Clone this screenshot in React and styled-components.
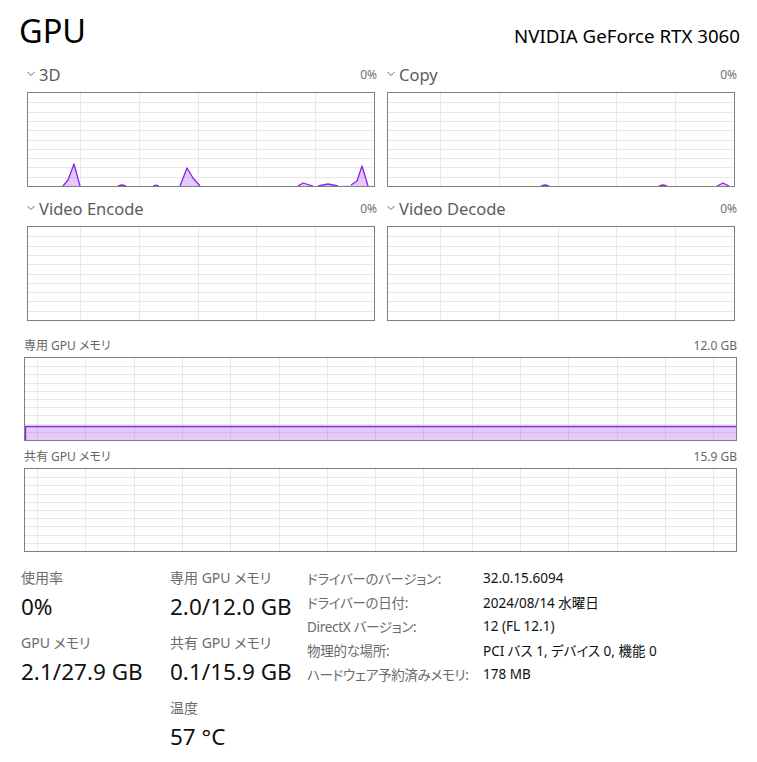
import React from "react";
import styled, { createGlobalStyle } from "styled-components";

const GlobalStyle = createGlobalStyle`
  body {
    margin: 0;
    background: #ffffff;
    font-family: "Noto Sans", "Noto Sans CJK JP", sans-serif;
    font-feature-settings: "palt";
    color: #000;
  }
`;

const PURPLE = "#8b22e8";
const FILL = "rgba(139, 34, 232, 0.24)";
const GRID = "#e8e8e8";

const Page = styled.div`
  width: 757px;
  box-sizing: border-box;
  padding: 11px 20px 0 21px;
`;

const Header = styled.div`
  display: flex;
  justify-content: space-between;
  align-items: baseline;
  margin-right: -3px;
`;

const Title = styled.h1`
  margin: 0 0 0 -2px;
  font-size: 32.5px;
  line-height: 40px;
  font-weight: 400;
`;

const Model = styled.div`
  font-size: 18.7px;
  line-height: 24px;
`;

const SmallGrid = styled.div`
  display: grid;
  grid-template-columns: 350px 350px;
  column-gap: 10px;
  row-gap: 9px;
  margin: 11px 0 0 6px;
`;

const ChartCell = styled.div`
  display: flex;
  flex-direction: column;
`;

const ChartHead = styled.div`
  display: flex;
  align-items: center;
  justify-content: space-between;
  height: 24px;
  margin-bottom: 6px;
`;

const ChartName = styled.div`
  display: flex;
  align-items: center;
  gap: 4px;
  font-size: 16.5px;
  color: #5c5c5c;
`;

const SmallValue = styled.div`
  font-size: 12px;
  color: #707070;
`;

const ChartBox = styled.div`
  box-sizing: border-box;
  width: ${(p) => p.$width || "100%"};
  height: ${(p) => p.$height}px;
  border: 1px solid #7f7f7f;
  background: #fff;
  svg {
    display: block;
  }
`;

const MemSection = styled.div`
  display: flex;
  flex-direction: column;
  gap: 6px;
  margin: 15px 0 0 3px;
`;

const MemHead = styled.div`
  display: flex;
  justify-content: space-between;
  align-items: center;
  height: 18px;
  margin-bottom: 3px;
  font-size: 12px;
  color: #666;
`;

const Stats = styled.div`
  display: grid;
  grid-template-columns: 149px 137px 1fr;
  margin-top: 17px;
`;

const StatColumn = styled.div`
  display: flex;
  flex-direction: column;
  gap: 12px;
`;

const StatBlock = styled.div`
  display: flex;
  flex-direction: column;
  gap: 5px;
`;

const StatLabel = styled.div`
  font-size: 14px;
  line-height: 18px;
  color: #6b6b6b;
`;

const StatValue = styled.div`
  font-size: 22.5px;
  line-height: 30px;
  color: #111;
`;

const InfoTable = styled.div`
  display: grid;
  grid-template-columns: 176px auto;
  grid-auto-rows: 24px;
  align-items: center;
  margin-top: -3px;
  font-size: 13.5px;
`;

const InfoLabel = styled.div`
  color: #6b6b6b;
  letter-spacing: -0.3px;
`;

const InfoValue = styled.div`
  color: #111;
`;

const Chevron = () => (
  <svg width="8" height="6" viewBox="0 0 8 6">
    <polyline points="0.5,1 4,4.5 7.5,1" fill="none" stroke="#6a6a6a" strokeWidth="1" />
  </svg>
);

function gridLines(w, h, x0, dx, dy) {
  const lines = [];
  for (let x = x0; x < w; x += dx) {
    const px = Math.round(x) + 0.5;
    lines.push(<line key={"v" + x} x1={px} y1={0} x2={px} y2={h} stroke={GRID} strokeWidth="1" />);
  }
  for (let k = 1; k * dy < h - 1; k++) {
    const py = Math.round(k * dy) + 0.5;
    lines.push(<line key={"h" + k} x1={0} y1={py} x2={w} y2={py} stroke={GRID} strokeWidth="1" />);
  }
  return lines;
}

const SW = 346;
const SH = 93;

function SmallChart({ peaks }) {
  const pts = [];
  pts.push([0, SH]);
  peaks.forEach((p) => p.forEach((q) => pts.push(q)));
  pts.push([SW, SH]);
  const str = pts.map((p) => p.join(",")).join(" ");
  return (
    <ChartBox $height={95} $width="348px">
      <svg width={SW} height={SH} viewBox={`0 0 ${SW} ${SH}`}>
        {gridLines(SW, SH, 52, 58.8, 9.3)}
        {peaks.length > 0 && (
          <>
            <polygon points={str} fill={FILL} stroke="none" />
            {peaks.map((p, i) => (
              <polyline
                key={i}
                points={p.map((q) => q.join(",")).join(" ")}
                fill="none"
                stroke={PURPLE}
                strokeWidth="1.3"
                strokeLinejoin="round"
              />
            ))}
          </>
        )}
      </svg>
    </ChartBox>
  );
}

const MW = 711;
const MH = 82;

function MemChart({ ratio }) {
  const y = Math.round(MH - MH * ratio) + 0.5;
  return (
    <ChartBox $height={84}>
      <svg width={MW} height={MH} viewBox={`0 0 ${MW} ${MH}`}>
        {gridLines(MW, MH, 12, 48.3, 8.2)}
        {ratio > 0.02 && (
          <>
            <rect x={0} y={y} width={MW} height={MH - y} fill={FILL} />
            <polyline points={`0.5,${MH} 0.5,${y} ${MW},${y}`} fill="none" stroke={PURPLE} strokeWidth="1.4" />
          </>
        )}
      </svg>
    </ChartBox>
  );
}

const peaks3d = [
  [[35, 93], [40, 87], [46, 71], [52, 93]],
  [[90, 93], [94, 92], [98, 93]],
  [[125, 93], [128, 92], [131, 93]],
  [[152, 93], [159, 75], [165, 85], [172, 93]],
  [[270, 93], [275, 90], [285, 93]],
  [[290, 93], [300, 91], [310, 93]],
  [[323, 92], [329, 88], [334, 73], [340, 93]],
];

const peaksCopy = [
  [[153, 93], [157, 92], [161, 93]],
  [[271, 93], [275, 92], [279, 93]],
  [[329, 93], [335, 90], [341, 93]],
];

const charts = [
  { name: "3D", peaks: peaks3d },
  { name: "Copy", peaks: peaksCopy },
  { name: "Video Encode", peaks: [] },
  { name: "Video Decode", peaks: [] },
];

const info = [
  ["ドライバーのバージョン:", "32.0.15.6094"],
  ["ドライバーの日付:", "2024/08/14 水曜日"],
  ["DirectX バージョン:", "12 (FL 12.1)"],
  ["物理的な場所:", "PCI バス 1, デバイス 0, 機能 0"],
  ["ハードウェア予約済みメモリ:", "178 MB"],
];

export default function App() {
  return (
    <>
      <GlobalStyle />
      <Page>
        <Header>
          <Title>GPU</Title>
          <Model>NVIDIA GeForce RTX 3060</Model>
        </Header>

        <SmallGrid>
          {charts.map((c) => (
            <ChartCell key={c.name}>
              <ChartHead>
                <ChartName>
                  <Chevron />
                  {c.name}
                </ChartName>
                <SmallValue>0%</SmallValue>
              </ChartHead>
              <SmallChart peaks={c.peaks} />
            </ChartCell>
          ))}
        </SmallGrid>

        <MemSection>
          <div>
            <MemHead>
              <span>専用 GPU メモリ</span>
              <span>12.0 GB</span>
            </MemHead>
            <MemChart ratio={2.0 / 12.0} />
          </div>
          <div>
            <MemHead>
              <span>共有 GPU メモリ</span>
              <span>15.9 GB</span>
            </MemHead>
            <MemChart ratio={0.1 / 15.9} />
          </div>
        </MemSection>

        <Stats>
          <StatColumn>
            <StatBlock>
              <StatLabel>使用率</StatLabel>
              <StatValue>0%</StatValue>
            </StatBlock>
            <StatBlock>
              <StatLabel>GPU メモリ</StatLabel>
              <StatValue>2.1/27.9 GB</StatValue>
            </StatBlock>
          </StatColumn>
          <StatColumn>
            <StatBlock>
              <StatLabel>専用 GPU メモリ</StatLabel>
              <StatValue>2.0/12.0 GB</StatValue>
            </StatBlock>
            <StatBlock>
              <StatLabel>共有 GPU メモリ</StatLabel>
              <StatValue>0.1/15.9 GB</StatValue>
            </StatBlock>
            <StatBlock>
              <StatLabel>温度</StatLabel>
              <StatValue>57 °C</StatValue>
            </StatBlock>
          </StatColumn>
          <InfoTable>
            {info.map(([k, v]) => (
              <React.Fragment key={k}>
                <InfoLabel>{k}</InfoLabel>
                <InfoValue>{v}</InfoValue>
              </React.Fragment>
            ))}
          </InfoTable>
        </Stats>
      </Page>
    </>
  );
}
